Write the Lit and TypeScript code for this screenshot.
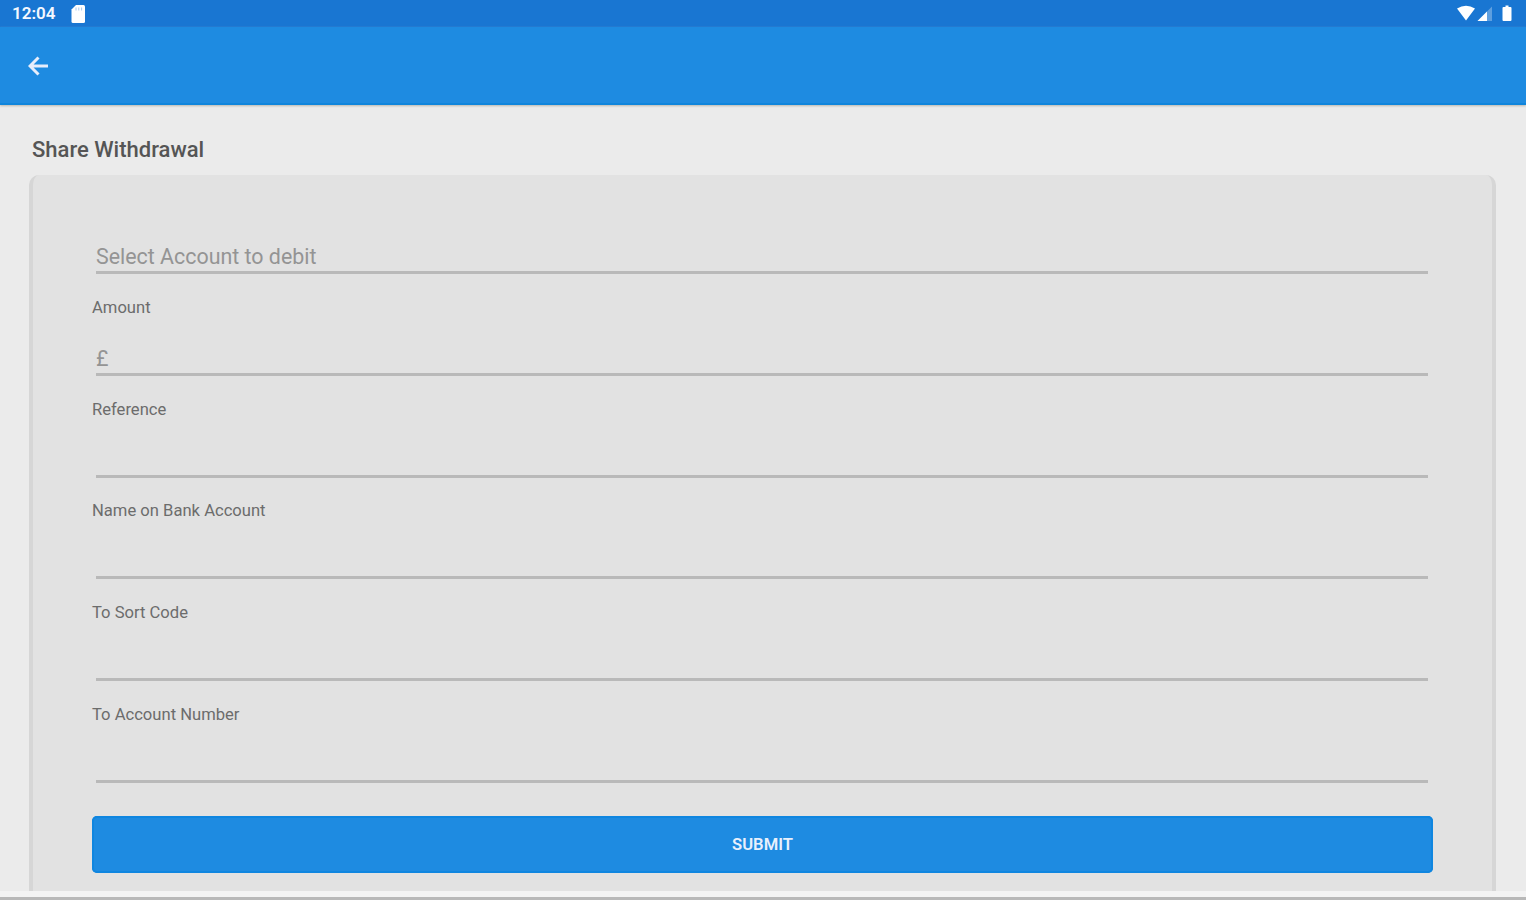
import { css, html, svg, LitElement } from "lit";
import { customElement, property } from "lit/decorators.js";

@customElement("status-bar")
export class StatusBarElement extends LitElement {
  @property()
  time: string = "";

  render() {
    return html`
      <span class="time">${this.time}</span>
      <svg width="16" height="20" viewBox="0 0 16 20">
        <path d="M6 1h7.500q1.500 0 1.500 1.500v15q0 1.500-1.500 1.500h-10.500q-1.500 0-1.500-1.500v-12z" />
        <path class="slots" d="M6 3.500v3M8.800 3.500v3M11.600 3.500v3" />
      </svg>
      <span class="spacer"></span>
      <svg width="58" height="20" viewBox="0 0 58 20">
        ${svg`
          <path d="M1 4.500Q10 -1 19 4.500L10 16.500z" />
          <path class="dim" d="M36 2.500v14.500H21.500z" />
          <path d="M31 7.500v9.500H21.500z" />
          <path d="M47.500 3h2v-1.500h3v1.500h2q1 0 1 1v12q0 1-1 1h-7q-1 0-1-1v-12q0-1 1-1z" />
        `}
      </svg>
    `;
  }

  static styles = css`
    :host {
      display: flex;
      align-items: center;
      height: 27px;
      padding: 0 12px;
      background-color: #1976d2;
      color: #f4f8ff;
    }
    .time {
      font-size: 17px;
      font-weight: 600;
      width: 58px;
      line-height: 27px;
    }
    .spacer {
      flex: 1;
    }
    svg {
      fill: #fff;
    }
    .slots {
      stroke: #a9c9ee;
      stroke-width: 1;
    }
    .dim {
      fill-opacity: 0.3;
    }
  `;
}

@customElement("form-field")
export class FormFieldElement extends LitElement {
  @property()
  label: string = "";

  @property()
  hint: string = "";

  render() {
    return html`
      ${this.label ? html`<label>${this.label}</label>` : ""}
      <div class="input">${this.hint}</div>
    `;
  }

  static styles = css`
    :host {
      display: flex;
      flex-direction: column;
      justify-content: flex-end;
      box-sizing: border-box;
      height: 101.700px;
    }
    label {
      color: #6c6c6c;
      font-size: 16.600px;
      line-height: 20px;
      margin-bottom: 22.200px;
    }
    .input {
      box-sizing: border-box;
      height: 36px;
      margin: 0 5px 0 4px;
      border-bottom: 3px solid #b9b9b9;
      color: #949494;
      font-size: 21.400px;
      line-height: 38px;
    }
  `;
}

@customElement("app-root")
export class AppRootElement extends LitElement {
  render() {
    return html`
      <status-bar time="12:04"></status-bar>
      <header>
        <svg width="20" height="20" viewBox="0 0 20 20">
          <path d="M20 10H2.500M10.500 1.500L2 10l8.500 8.500" />
        </svg>
      </header>
      <main>
        <h1>Share Withdrawal</h1>
        <section>
          <form-field hint="Select Account to debit"></form-field>
          <form-field label="Amount" hint="£"></form-field>
          <form-field label="Reference"></form-field>
          <form-field label="Name on Bank Account"></form-field>
          <form-field label="To Sort Code"></form-field>
          <form-field label="To Account Number"></form-field>
          <button>SUBMIT</button>
        </section>
      </main>
      <footer></footer>
    `;
  }

  static styles = css`
    :host {
      display: flex;
      flex-direction: column;
      height: 900px;
      overflow: hidden;
      background-color: #ebebeb;
      font-family: Roboto, "Liberation Sans", sans-serif;
    }
    header {
      display: flex;
      align-items: center;
      flex: none;
      box-sizing: border-box;
      height: 78px;
      padding: 2px 0 0 28px;
      background-color: #1e8be1;
      border-bottom: 2px solid #0f85dc;
      box-shadow: 0 1px 2px #b9b7b0;
    }
    header svg {
      fill: none;
      stroke: #e6edfb;
      stroke-width: 3;
    }
    main {
      flex: 1;
      min-height: 0;
      padding: 32px 30px 0 29px;
      display: flex;
      flex-direction: column;
    }
    h1 {
      margin: 0 0 12px 3px;
      color: #555;
      font-size: 22px;
      font-weight: 500;
      line-height: 26px;
    }
    section {
      flex: 1;
      display: flex;
      flex-direction: column;
      box-sizing: border-box;
      padding: 0 59px;
      border: solid #d6d6d6;
      border-width: 0 4px;
      border-radius: 10px 10px 0 0;
      background-color: #e2e2e2;
    }
    form-field:first-child {
      height: 99.400px;
    }
    button {
      height: 57px;
      margin-top: 33px;
      padding: 0;
      border: 0;
      border-radius: 5px;
      background-color: #1e8be1;
      box-shadow: inset 0 0 0 2px #0f86e0;
      color: #e8f0fc;
      font-family: inherit;
      font-size: 16.600px;
      font-weight: 600;
    }
    footer {
      flex: none;
      box-sizing: border-box;
      height: 9px;
      background-color: #f3f3f3;
      border-bottom: 3px solid #b8b8b8;
    }
  `;
}
